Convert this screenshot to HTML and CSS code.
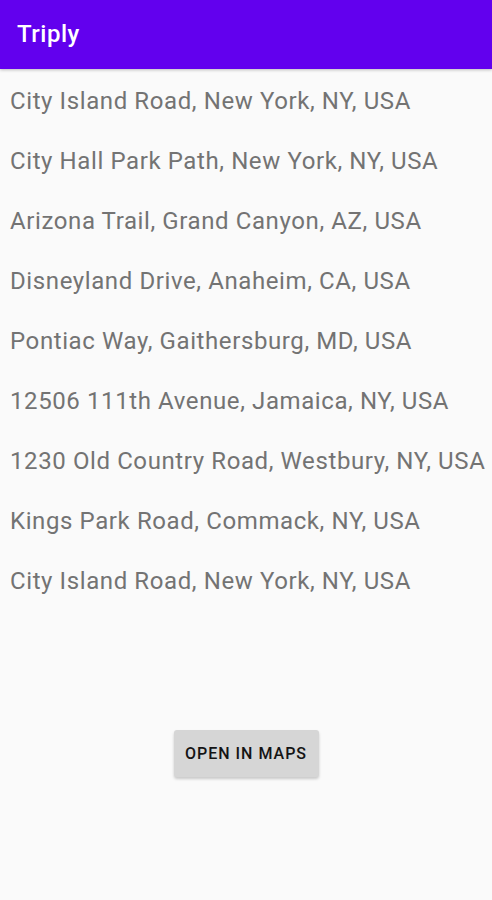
FILE: index.html
```html
<!DOCTYPE html>
<html>
<head>
<meta charset="utf-8">
<link rel="stylesheet" href="styles.css">
</head>
<body>
<header class="appbar"><span class="title">Triply</span></header>
<ul class="list">
  <li>City Island Road, New York, NY, USA</li>
  <li>City Hall Park Path, New York, NY, USA</li>
  <li>Arizona Trail, Grand Canyon, AZ, USA</li>
  <li>Disneyland Drive, Anaheim, CA, USA</li>
  <li>Pontiac Way, Gaithersburg, MD, USA</li>
  <li>12506 111th Avenue, Jamaica, NY, USA</li>
  <li>1230 Old Country Road, Westbury, NY, USA</li>
  <li>Kings Park Road, Commack, NY, USA</li>
  <li>City Island Road, New York, NY, USA</li>
</ul>
<div class="actions"><button class="btn">OPEN IN MAPS</button></div>
</body>
</html>
```
FILE: styles.css
```css
html, body { margin: 0; padding: 0; }
body {
  background: #fafafa;
  font-family: Roboto, "Noto Sans", sans-serif;
  width: 492px;
  height: 900px;
  overflow: hidden;
}
.appbar {
  height: 69px;
  background: #6200ee;
  display: flex;
  align-items: center;
  padding-left: 17px;
  padding-bottom: 1px;
  box-sizing: border-box;
  box-shadow: 0 1px 3px rgba(0,0,0,0.25);
}
.title {
  color: #fff;
  font-size: 24px;
  font-weight: 500;
  letter-spacing: 0.5px;
}
.list {
  list-style: none;
  margin: 2px 0 0;
  padding: 0;
}
.list li {
  height: 60px;
  display: flex;
  align-items: center;
  padding-left: 10px;
  font-size: 24px;
  letter-spacing: 0.6px;
  color: #737373;
  white-space: nowrap;
}
.actions {
  display: flex;
  justify-content: center;
  margin-top: 119px;
}
.btn {
  width: 145px;
  height: 47px;
  background: #d6d6d6;
  border: none;
  border-radius: 3px;
  box-shadow: 0 2px 3px rgba(0,0,0,0.2);
  font-family: Roboto, sans-serif;
  font-weight: 500;
  font-size: 16px;
  color: #141414;
  letter-spacing: 1px;
  padding: 0;
}
```
